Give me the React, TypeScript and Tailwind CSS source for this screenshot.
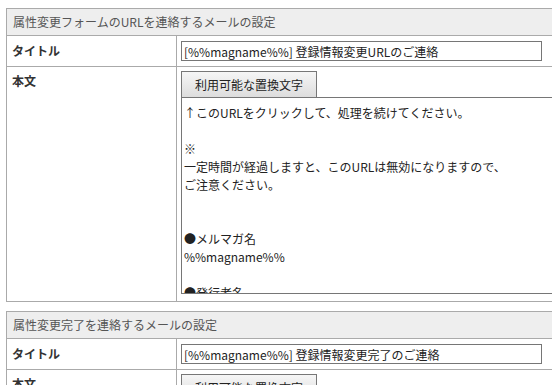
const FONT = { fontFamily: '"Noto Sans CJK JP", "Noto Sans", sans-serif' };

const BODY_URL = `↑このURLをクリックして、処理を続けてください。

※
一定時間が経過しますと、このURLは無効になりますので、
ご注意ください。


●メルマガ名
%%magname%%

●発行者名
%%publisher%%`;

const BODY_DONE = `属性変更が完了しました。

●メルマガ名
%%magname%%`;

function MailSection({ heading, title, body }: { heading: string; title: string; body: string }) {
    return (
        <div className="w-[620px] border border-[#aaaaaa] text-[12px]">
            <div className="h-[27px] bg-[#eeeeee] px-[6px] flex items-center text-[#555555] border-b border-[#aaaaaa]">
                {heading}
            </div>
            <div className="flex h-[31px] border-b border-[#aaaaaa]">
                <div className="w-[170px] shrink-0 border-r border-[#aaaaaa] px-[5px] flex items-center font-bold text-[#333333]">
                    タイトル
                </div>
                <div className="pl-[4px] pt-[5px]">
                    <input
                        type="text"
                        readOnly
                        defaultValue={title}
                        className="w-[361px] h-[20px] border border-[#767676] px-[2px] text-[12px] text-[#222222] outline-none"
                        style={FONT}
                    />
                </div>
            </div>
            <div className="flex h-[234px]">
                <div className="w-[170px] shrink-0 border-r border-[#aaaaaa] px-[5px] pt-[5px] font-bold text-[#333333]">
                    本文
                </div>
                <div className="pl-[4px] pt-[4px] flex flex-col">
                    <button
                        type="button"
                        className="w-[136px] h-[27px] border border-[#777777] bg-gradient-to-b from-[#f6f6f6] to-[#dddddd] text-[12px] text-[#222222]"
                        style={FONT}
                    >
                        利用可能な置換文字
                    </button>
                    <textarea
                        readOnly
                        defaultValue={body}
                        className="w-[420px] h-[197px] -mt-px border border-[#767676] pl-[2px] pt-[6px] text-[12px] leading-[18px] text-[#222222] resize-none overflow-hidden outline-none"
                        style={FONT}
                    />
                </div>
            </div>
        </div>
    );
}

export default function App() {
    return (
        <div className="w-[552px] h-[385px] overflow-hidden bg-white pt-[8px] pl-[6px]" style={FONT}>
            <div className="flex flex-col gap-[9px]">
                <MailSection
                    heading="属性変更フォームのURLを連絡するメールの設定"
                    title="[%%magname%%] 登録情報変更URLのご連絡"
                    body={BODY_URL}
                />
                <MailSection
                    heading="属性変更完了を連絡するメールの設定"
                    title="[%%magname%%] 登録情報変更完了のご連絡"
                    body={BODY_DONE}
                />
            </div>
        </div>
    );
}
